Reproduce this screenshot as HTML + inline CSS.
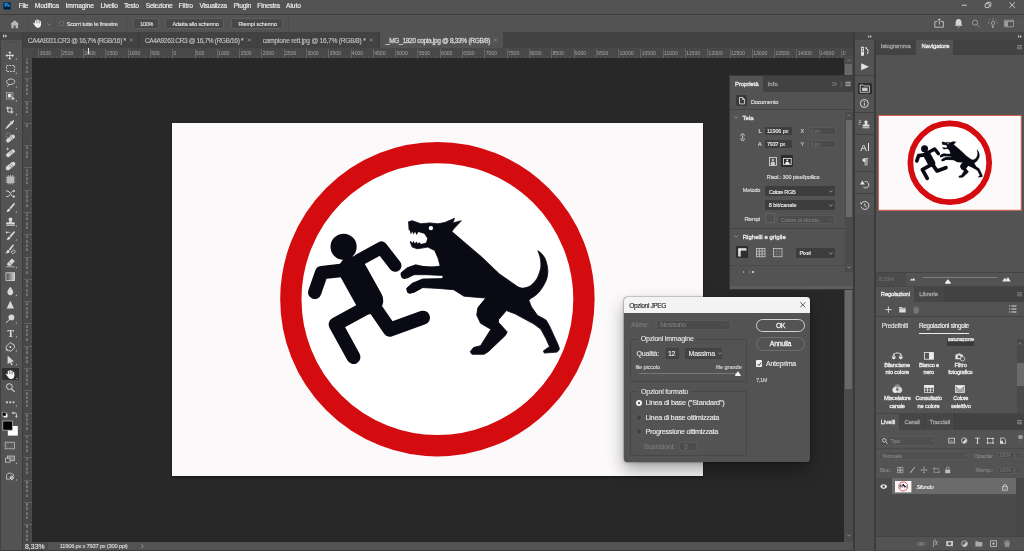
<!DOCTYPE html>
<html lang="it">
<head>
<meta charset="utf-8">
<title>Photoshop - Opzioni JPEG</title>
<style>
*{box-sizing:border-box;margin:0;padding:0}
html,body{width:1024px;height:551px;overflow:hidden;background:#282828}
body{position:relative;font-family:"Liberation Sans",sans-serif;color:#dcdcdc;font-size:6.6px;line-height:1}
.a{position:absolute}
.t{position:absolute;white-space:nowrap;line-height:1;-webkit-text-stroke-width:0.120px}
.b{font-weight:bold}
.t.sb{font-weight:normal;-webkit-text-stroke-width:0.260px}
svg{position:absolute;overflow:visible}
/* top */
#menubar{left:0;top:0;width:1024px;height:14px;background:#535353}
#menuline{left:0;top:14px;width:1024px;height:1px;background:#3e3e3e}
#optbar{left:0;top:15px;width:1024px;height:17px;background:#535353}
#tabbar{left:0;top:32px;width:853px;height:16px;background:#424242}
.menu{font-size:6.7px;color:#ececec;-webkit-text-stroke:0.18px #ececec}
.btn{height:10.5px;background:#484848;border:0.5px solid #5e5e5e;border-radius:1.5px}
.btn span{font-size:5.400px;color:#e6e6e6}
.tab{font-size:6.6px;color:#c4c4c4;-webkit-text-stroke:0.12px #c4c4c4}
.tabx{top:36.6px;font-size:7px;color:#a8a8a8}
/* rulers */
#hruler{left:23px;top:48px;width:830px;height:9.5px;background:#484848}
#vruler{left:23px;top:57.5px;width:9px;height:484.100px;background:#484848}
.rl{position:absolute;top:3.1px;font-size:5.1px;color:#a4a4a4;line-height:1;white-space:nowrap}
.rk{position:absolute;top:0.6px;width:0.7px;height:9px;background:#646464}
.rm{position:absolute;top:8px;width:0.5px;height:1.500px;background:#555}
.vk{position:absolute;left:0.6px;height:0.700px;width:8.4px;background:#606060}
.vm{position:absolute;left:7.500px;height:0.500px;width:1.500px;background:#555}
.vl{position:absolute;left:2.500px;font-size:4.400px;line-height:4.300px;color:#a9a9a9;text-align:center;width:3px}
/* toolbar */
#toolhead{left:0;top:32px;width:22.5px;height:8px;background:#454545}
#toolbar{left:0;top:40px;width:22.5px;height:511px;background:#535353}
#canvas{left:31.500px;top:57.5px;width:813px;height:484.100px;background:#282828}
#status{left:22.5px;top:541.6px;width:830.5px;height:9.4px;background:#535353}
/* panels */
.pan{background:#535353}
.lbl{font-size:5.700px;color:#f0f0f0}
.dk{background:#424242}
</style>
</head>
<body>
<div id="root" style="position:absolute;left:0;top:0;width:1024px;height:551px;will-change:transform">
<!-- ===== canvas area ===== -->
<div id="canvas" class="a"></div>
<div id="doc" class="a" style="left:172.2px;top:122.8px;width:530.9px;height:353.1px;background:#fbf9fa;box-shadow:0 0.5px 2px rgba(0,0,0,.55)"></div>
<svg id="art" style="left:0;top:0" width="1024" height="551" viewBox="0 0 1024 551">
<defs>
<g id="sign">
<circle cx="437.400" cy="299.200" r="136.500" fill="#ffffff"/>
<circle cx="437.400" cy="299.200" r="146.550" fill="none" stroke="#d40b0f" stroke-width="21.300"/>
<g id="figures" fill="#090a14" stroke="#090a14" stroke-linejoin="round" stroke-linecap="round">
<!-- man -->
<circle cx="343.600" cy="246.800" r="13.100" stroke="none"/>
<path d="M352.400 270L369.400 300.500" fill="none" stroke-width="27.600"/>
<path d="M345 270L321.600 272.600L314.700 292.400" fill="none" stroke-width="13.400"/>
<path d="M358.600 260.200L381.400 247.800L395.200 265.600" fill="none" stroke-width="12.500"/>
<path d="M365.400 308.100L335.600 324.400L353.500 357" fill="none" stroke-width="14"/>
<path d="M374.900 308.100L389.900 329.700L423 317.700" fill="none" stroke-width="14"/>
<!-- dog -->
<path stroke-width="0.800" d="M408.800 221.700L412.200 220.700L420.900 223.800L429.500 222.900L438.100 223.800L445 222.400L454.500 218.300L452.800 222.900L461.400 220.700L453.600 229L451.900 231.600L464 241.900L481.200 256.600L499.500 274L516.700 286
C519 287.600 521.500 288.300 523.600 288.100C527 287.600 530 286.500 532.200 284.300C535 281.500 537.300 278.800 538.300 275.700C539.800 272 540.900 268.500 540.900 265.300C541 262 540.500 258.500 539.500 255L537.800 250.800
C540 252 542 253.800 543.500 256C545 258 546 260.500 546.500 263C547.500 266 547.900 269 547.800 272.200C547.600 276 546.800 279.500 545.200 282.600C543.500 286 541.500 289.300 539.100 292.100C537 294.500 534.500 296.500 531.400 298.100L528.800 300.200
L531.400 306.700L537.400 315.300L546 320L549.500 325.900L558.100 344.800L559.500 349.100L557.200 352.100L544.300 353.100L543.400 350.900L549.500 346.600L546 338.800L540.900 329.300L534 324.100L515 313.800L506.400 310.600L498.600 319.700L498.600 322.400L507.200 331.900L505.500 335.300L488.300 351.700L484 354.300L471.900 354.300L470.200 351.700L473.600 347.400L480.500 345.700L490.900 329.300L480.500 323.300L476.700 315L477.900 307.800L485.700 298.100L475.300 297.200L464 296.200L453.600 289.700L438.100 288.400L422.600 287.600L414 292.400L407.900 292.800L406.700 288.400L412.200 283.300L422.600 279L442.400 278.600L443.300 275.500L426 274.700L414 274.700L407.100 278.100L401.900 277.200L401 272.900L407.100 267.800L415.700 264.800L429.500 267.800L440.200 266L438.100 258.300L434.700 250.500L427.800 247.100L417.400 248.800L412.200 247.100L410.200 241.900L409.100 229.800z"/>
<path d="M446 270.800L415 269.600L404.600 275" fill="none" stroke-width="7.600"/>
<path d="M455 284.400L422.600 283.300L410.600 289.600" fill="none" stroke-width="7.800"/>
<circle cx="488.600" cy="312" r="11.200" stroke="none"/>
<path fill="#ffffff" stroke="none" d="M407 230.300L409.700 230.300L410.900 234.500L412.200 231.600L413.600 234.500L415 231.700L416.700 235L418.300 232.100L424.300 233.800L427.400 238.400L426 242.800L420.900 244.100L419.100 241.900L417.800 243.800L416.400 241.400L415 243.600L413.600 241L412.200 243.100L410.900 240.700L409.700 241.900L407 241.900z"/>
<circle cx="430.900" cy="228.100" r="2.200" fill="#ffffff" stroke="none"/>
</g>
</g>
</defs>
<use href="#sign"/>
</svg>

<!-- ===== top bars ===== -->
<div id="menubar" class="a">
  <div class="a" style="left:3px;top:2px;width:8.2px;height:8px;border-radius:1.6px;background:#001e36;border:0.5px solid #0b3a5f"></div>
  <span class="t b" style="letter-spacing:-0.237px;left:4.4px;top:4.300px;font-size:4.8px;color:#31a8ff">Ps</span>
  <span class="t menu" style="letter-spacing:-0.345px;top:3.2px;left:18.8px">File</span>
  <span class="t menu" style="letter-spacing:-0.113px;top:3.2px;left:34.8px">Modifica</span>
  <span class="t menu" style="letter-spacing:-0.147px;top:3.2px;left:65.6px">Immagine</span>
  <span class="t menu" style="letter-spacing:-0.281px;top:3.2px;left:100.6px">Livello</span>
  <span class="t menu" style="letter-spacing:-0.277px;top:3.2px;left:124px">Testo</span>
  <span class="t menu" style="letter-spacing:-0.308px;top:3.2px;left:145.8px">Selezione</span>
  <span class="t menu" style="letter-spacing:-0.079px;top:3.2px;left:178.6px">Filtro</span>
  <span class="t menu" style="letter-spacing:-0.270px;top:3.2px;left:199.5px">Visualizza</span>
  <span class="t menu" style="letter-spacing:-0.199px;top:3.2px;left:233.6px">Plugin</span>
  <span class="t menu" style="letter-spacing:-0.209px;top:3.2px;left:257.3px">Finestra</span>
  <span class="t menu" style="letter-spacing:-0.050px;top:3.2px;left:286px">Aiuto</span>
  <svg style="left:958px;top:0" width="66" height="14" viewBox="958 0 66 14" fill="none" stroke="#e6e6e6" stroke-width="0.8">
    <path d="M961.7 5.2h5.2"/>
    <rect x="985.2" y="3.6" width="4" height="4" rx="0.8"/><path d="M986.6 3.4v-0.3a0.8 0.8 0 0 1 .8-.8h2.6a0.8 0.8 0 0 1 .8.8v2.6a0.8 0.8 0 0 1-.8.8h-.4"/>
    <path d="M1009.4 2.3l5.6 5.6M1015 2.3l-5.6 5.6"/>
  </svg>
</div>
<div id="menuline" class="a"></div>
<div id="optbar" class="a">
  <!-- home -->
  <svg style="left:10.4px;top:4.6px" width="9.4" height="8.4" viewBox="0 0 9.4 8.4"><path d="M4.7 0.2L0.2 4.2h1.2v4h2.3V5.6h2v2.6h2.3v-4h1.2z" fill="#b9b9b9"/></svg>
  <div class="a" style="left:27.6px;top:2px;width:0.6px;height:13.5px;background:#4a4a4a"></div>
  <!-- hand -->
  <svg style="left:32.600px;top:4.200px" width="10" height="10" viewBox="0 0 10 10"><g transform="translate(0 0) scale(0.900)" fill="#f1f1f1"><rect x="2.100" y="1.300" width="1.350" height="5" rx="0.650"/><rect x="3.900" y="0.300" width="1.400" height="6" rx="0.700"/><rect x="5.750" y="0.900" width="1.350" height="5.400" rx="0.650"/><rect x="7.550" y="2.300" width="1.250" height="4.400" rx="0.600"/><path d="M2.100 4.700h6.700v1.900c0 1.900-1.400 3.100-3.300 3.100-1.600 0-2.400-.800-3.200-2L.3 5.100c-.4-.7.500-1.300 1-.7l.8.900z"/></g></svg>
  <svg style="left:46.6px;top:8.2px" width="4" height="3" viewBox="0 0 4 3"><path d="M0.4 0.5L2 2.2 3.6 0.5" fill="none" stroke="#9a9a9a" stroke-width="0.6"/></svg>
  <div class="a" style="left:54px;top:2px;width:0.6px;height:13.5px;background:#4a4a4a"></div>
  <div class="a" style="left:58.8px;top:6.4px;width:5px;height:5px;border-radius:1px;border:0.6px solid #6a6a6a;background:#4b4b4b"></div>
  <span class="t" style="letter-spacing:-0.238px;left:66.5px;top:6.4px;font-size:6px;color:#e4e4e4">Scorri tutte le finestre</span>
  <div class="a" style="left:126.2px;top:2px;width:0.6px;height:13.5px;background:#4a4a4a"></div>
  <div class="a btn" style="left:133px;top:3px;width:25.6px"><span class="t" style="letter-spacing:-0.299px;top:3.3px;left:6.3px;right:auto;text-align:left">100%</span></div>
  <div class="a btn" style="left:165px;top:3px;width:58.7px"><span class="t" style="letter-spacing:-0.066px;top:3.3px;left:6.4px;right:auto;text-align:left">Adatta allo schermo</span></div>
  <div class="a btn" style="left:231px;top:3px;width:51.6px"><span class="t" style="letter-spacing:-0.025px;top:3.3px;left:6.4px;right:auto;text-align:left">Riempi schermo</span></div>
  <div class="a" style="left:287.6px;top:2px;width:0.6px;height:13.5px;background:#4a4a4a"></div>
  <!-- right icons -->
  <svg style="left:930px;top:0" width="94" height="17" viewBox="930 15 94 17" fill="none" stroke="#d4d4d4" stroke-width="0.8">
    <path d="M937.2 21.6h-2.4v5.6h8.600v-5.600h-2.400M939.3 24.600v-5.600M937.600 20.400l1.700-1.700 1.700 1.700"/>
    <path d="M958.6 19c-1.900 0-2.900 1.400-2.900 3.200v2.200l-1.100 1.400h8l-1.100-1.400v-2.200c0-1.800-1-3.200-2.900-3.200zM957.600 26.600a1 1 0 0 0 2 0z" fill="#d4d4d4" stroke="none"/>
    <circle cx="975" cy="22.600" r="2.600" stroke="#a9a9a9"/><path d="M977 24.600l2.600 2.600" stroke="#a9a9a9"/>
    <path d="M992.800 25.400c-1.600-1-1.700-3.800.0-4.400 1.700-.6 2.700 2.800 0 4.400zM991.900 26.400h1.800M992 27.400h1.600M992.800 19.300v-.9M989.800 20.300l-.7-.6M995.800 20.300l.7-.6M989 22.900h-.9M996.600 22.900h.9" stroke="#e0e0e0" stroke-width="0.6"/>
    <rect x="1004.400" y="20.200" width="9.200" height="6.600" rx="0.600" stroke="#a9a9a9"/><rect x="1005.200" y="21.800" width="2.600" height="4.400" fill="#a9a9a9" stroke="none"/><path d="M1004.400 21.600h9.200" stroke="#a9a9a9"/>
    <path d="M1017 23l1.200 1.200 1.200-1.200" stroke="#6e6e6e" stroke-width="0.6"/>
  </svg>
</div>
<div id="tabbar" class="a">
  <svg style="left:2.6px;top:3.2px" width="5" height="3.6" viewBox="0 0 5 3.6"><path d="M0.3 0.3L2 1.8 0.3 3.300zM2.600 0.300L4.300 1.800 2.600 3.300z" fill="#c8c8c8"/></svg>
  <div class="a" style="left:380px;top:0;width:123.400px;height:16px;background:#535353"></div>
  <div class="a" style="left:138.4px;top:0;width:0.6px;height:16px;background:#3a3a3a"></div>
  <div class="a" style="left:257.4px;top:0;width:0.6px;height:16px;background:#3a3a3a"></div>
  <div class="a" style="left:379.4px;top:0;width:0.6px;height:16px;background:#3a3a3a"></div>
  <span class="t tab" style="letter-spacing:-0.379px;left:27.8px;top:6.2px">CA4A9311.CR3 @ 16,7% (RGB/16) *</span>
  <span class="t tab" style="letter-spacing:-0.382px;left:144.900px;top:6.2px">CA4A9263.CR3 @ 16,7% (RGB/16) *</span>
  <span class="t tab" style="letter-spacing:-0.210px;left:262.800px;top:6.2px">campione rett.jpg @ 16,7% (RGB/8) *</span>
  <span class="t tab sb" style="letter-spacing:-0.339px;left:385.800px;top:6.2px;color:#f2f2f2">_MG_1820 copia.jpg @ 8,33% (RGB/8)</span>
  <svg style="left:0;top:0" width="510" height="16" viewBox="0 0 510 16" stroke="#b0b0b0" stroke-width="0.600" fill="none">
    <path d="M130 6.6l2.800 2.800M132.800 6.600l-2.800 2.800"/>
    <path d="M247.800 6.600l2.800 2.800M250.600 6.600l-2.800 2.800"/>
    <path d="M369.800 6.600l2.800 2.800M372.600 6.600l-2.800 2.800"/>
    <path d="M494 6.600l2.800 2.800M496.800 6.600l-2.800 2.800" stroke="#9d9d9d"/>
  </svg>
</div>
<div id="hruler" class="a" style="overflow:hidden"><i class="rk" style="left:15.43px"></i><span class="rl" style="left:16.73px">3000</span><i class="rm" style="left:19.89px"></i><i class="rm" style="left:24.35px"></i><i class="rm" style="left:28.80px"></i><i class="rm" style="left:33.26px"></i><i class="rk" style="left:37.72px"></i><span class="rl" style="left:39.02px">2500</span><i class="rm" style="left:42.18px"></i><i class="rm" style="left:46.64px"></i><i class="rm" style="left:51.10px"></i><i class="rm" style="left:55.56px"></i><i class="rk" style="left:60.02px"></i><span class="rl" style="left:61.32px">2000</span><i class="rm" style="left:64.48px"></i><i class="rm" style="left:68.94px"></i><i class="rm" style="left:73.40px"></i><i class="rm" style="left:77.85px"></i><i class="rk" style="left:82.31px"></i><span class="rl" style="left:83.61px">1500</span><i class="rm" style="left:86.77px"></i><i class="rm" style="left:91.23px"></i><i class="rm" style="left:95.69px"></i><i class="rm" style="left:100.15px"></i><i class="rk" style="left:104.61px"></i><span class="rl" style="left:105.91px">1000</span><i class="rm" style="left:109.07px"></i><i class="rm" style="left:113.53px"></i><i class="rm" style="left:117.99px"></i><i class="rm" style="left:122.45px"></i><i class="rk" style="left:126.90px"></i><span class="rl" style="left:128.20px">500</span><i class="rm" style="left:131.36px"></i><i class="rm" style="left:135.82px"></i><i class="rm" style="left:140.28px"></i><i class="rm" style="left:144.74px"></i><i class="rk" style="left:149.20px"></i><span class="rl" style="left:150.50px">0</span><i class="rm" style="left:153.66px"></i><i class="rm" style="left:158.12px"></i><i class="rm" style="left:162.58px"></i><i class="rm" style="left:167.04px"></i><i class="rk" style="left:171.50px"></i><span class="rl" style="left:172.80px">500</span><i class="rm" style="left:175.95px"></i><i class="rm" style="left:180.41px"></i><i class="rm" style="left:184.87px"></i><i class="rm" style="left:189.33px"></i><i class="rk" style="left:193.79px"></i><span class="rl" style="left:195.09px">1000</span><i class="rm" style="left:198.25px"></i><i class="rm" style="left:202.71px"></i><i class="rm" style="left:207.17px"></i><i class="rm" style="left:211.63px"></i><i class="rk" style="left:216.09px"></i><span class="rl" style="left:217.39px">1500</span><i class="rm" style="left:220.55px"></i><i class="rm" style="left:225.00px"></i><i class="rm" style="left:229.46px"></i><i class="rm" style="left:233.92px"></i><i class="rk" style="left:238.38px"></i><span class="rl" style="left:239.68px">2000</span><i class="rm" style="left:242.84px"></i><i class="rm" style="left:247.30px"></i><i class="rm" style="left:251.76px"></i><i class="rm" style="left:256.22px"></i><i class="rk" style="left:260.68px"></i><span class="rl" style="left:261.98px">2500</span><i class="rm" style="left:265.14px"></i><i class="rm" style="left:269.60px"></i><i class="rm" style="left:274.05px"></i><i class="rm" style="left:278.51px"></i><i class="rk" style="left:282.97px"></i><span class="rl" style="left:284.27px">3000</span><i class="rm" style="left:287.43px"></i><i class="rm" style="left:291.89px"></i><i class="rm" style="left:296.35px"></i><i class="rm" style="left:300.81px"></i><i class="rk" style="left:305.27px"></i><span class="rl" style="left:306.57px">3500</span><i class="rm" style="left:309.73px"></i><i class="rm" style="left:314.19px"></i><i class="rm" style="left:318.65px"></i><i class="rm" style="left:323.10px"></i><i class="rk" style="left:327.56px"></i><span class="rl" style="left:328.86px">4000</span><i class="rm" style="left:332.02px"></i><i class="rm" style="left:336.48px"></i><i class="rm" style="left:340.94px"></i><i class="rm" style="left:345.40px"></i><i class="rk" style="left:349.86px"></i><span class="rl" style="left:351.16px">4500</span><i class="rm" style="left:354.32px"></i><i class="rm" style="left:358.78px"></i><i class="rm" style="left:363.24px"></i><i class="rm" style="left:367.70px"></i><i class="rk" style="left:372.15px"></i><span class="rl" style="left:373.45px">5000</span><i class="rm" style="left:376.61px"></i><i class="rm" style="left:381.07px"></i><i class="rm" style="left:385.53px"></i><i class="rm" style="left:389.99px"></i><i class="rk" style="left:394.45px"></i><span class="rl" style="left:395.75px">5500</span><i class="rm" style="left:398.91px"></i><i class="rm" style="left:403.37px"></i><i class="rm" style="left:407.83px"></i><i class="rm" style="left:412.29px"></i><i class="rk" style="left:416.75px"></i><span class="rl" style="left:418.05px">6000</span><i class="rm" style="left:421.20px"></i><i class="rm" style="left:425.66px"></i><i class="rm" style="left:430.12px"></i><i class="rm" style="left:434.58px"></i><i class="rk" style="left:439.04px"></i><span class="rl" style="left:440.34px">6500</span><i class="rm" style="left:443.50px"></i><i class="rm" style="left:447.96px"></i><i class="rm" style="left:452.42px"></i><i class="rm" style="left:456.88px"></i><i class="rk" style="left:461.34px"></i><span class="rl" style="left:462.64px">7000</span><i class="rm" style="left:465.80px"></i><i class="rm" style="left:470.25px"></i><i class="rm" style="left:474.71px"></i><i class="rm" style="left:479.17px"></i><i class="rk" style="left:483.63px"></i><span class="rl" style="left:484.93px">7500</span><i class="rm" style="left:488.09px"></i><i class="rm" style="left:492.55px"></i><i class="rm" style="left:497.01px"></i><i class="rm" style="left:501.47px"></i><i class="rk" style="left:505.93px"></i><span class="rl" style="left:507.23px">8000</span><i class="rm" style="left:510.39px"></i><i class="rm" style="left:514.85px"></i><i class="rm" style="left:519.30px"></i><i class="rm" style="left:523.76px"></i><i class="rk" style="left:528.22px"></i><span class="rl" style="left:529.52px">8500</span><i class="rm" style="left:532.68px"></i><i class="rm" style="left:537.14px"></i><i class="rm" style="left:541.60px"></i><i class="rm" style="left:546.06px"></i><i class="rk" style="left:550.52px"></i><span class="rl" style="left:551.82px">9000</span><i class="rm" style="left:554.98px"></i><i class="rm" style="left:559.44px"></i><i class="rm" style="left:563.90px"></i><i class="rm" style="left:568.36px"></i><i class="rk" style="left:572.81px"></i><span class="rl" style="left:574.11px">9500</span><i class="rm" style="left:577.27px"></i><i class="rm" style="left:581.73px"></i><i class="rm" style="left:586.19px"></i><i class="rm" style="left:590.65px"></i><i class="rk" style="left:595.11px"></i><span class="rl" style="left:596.41px">10000</span><i class="rm" style="left:599.57px"></i><i class="rm" style="left:604.03px"></i><i class="rm" style="left:608.49px"></i><i class="rm" style="left:612.95px"></i><i class="rk" style="left:617.41px"></i><span class="rl" style="left:618.71px">10500</span><i class="rm" style="left:621.86px"></i><i class="rm" style="left:626.32px"></i><i class="rm" style="left:630.78px"></i><i class="rm" style="left:635.24px"></i><i class="rk" style="left:639.70px"></i><span class="rl" style="left:641.00px">11000</span><i class="rm" style="left:644.16px"></i><i class="rm" style="left:648.62px"></i><i class="rm" style="left:653.08px"></i><i class="rm" style="left:657.54px"></i><i class="rk" style="left:662.00px"></i><span class="rl" style="left:663.30px">11500</span><i class="rm" style="left:666.46px"></i><i class="rm" style="left:670.91px"></i><i class="rm" style="left:675.37px"></i><i class="rm" style="left:679.83px"></i><i class="rk" style="left:684.29px"></i><span class="rl" style="left:685.59px">12000</span><i class="rm" style="left:688.75px"></i><i class="rm" style="left:693.21px"></i><i class="rm" style="left:697.67px"></i><i class="rm" style="left:702.13px"></i><i class="rk" style="left:706.59px"></i><span class="rl" style="left:707.89px">12500</span><i class="rm" style="left:711.05px"></i><i class="rm" style="left:715.51px"></i><i class="rm" style="left:719.96px"></i><i class="rm" style="left:724.42px"></i><i class="rk" style="left:728.88px"></i><span class="rl" style="left:730.18px">13000</span><i class="rm" style="left:733.34px"></i><i class="rm" style="left:737.80px"></i><i class="rm" style="left:742.26px"></i><i class="rm" style="left:746.72px"></i><i class="rk" style="left:751.18px"></i><span class="rl" style="left:752.48px">13500</span><i class="rm" style="left:755.64px"></i><i class="rm" style="left:760.10px"></i><i class="rm" style="left:764.56px"></i><i class="rm" style="left:769.01px"></i><i class="rk" style="left:773.47px"></i><span class="rl" style="left:774.77px">14000</span><i class="rm" style="left:777.93px"></i><i class="rm" style="left:782.39px"></i><i class="rm" style="left:786.85px"></i><i class="rm" style="left:791.31px"></i><i class="rk" style="left:795.77px"></i><span class="rl" style="left:797.07px">14500</span><i class="rm" style="left:800.23px"></i><i class="rm" style="left:804.69px"></i><i class="rm" style="left:809.15px"></i><i class="rm" style="left:813.61px"></i><i class="rk" style="left:818.06px"></i><span class="rl" style="left:819.36px;width:4px;overflow:hidden">15000</span><i class="rm" style="left:822.52px"></i><i class="rm" style="left:826.98px"></i>
  <div class="a" style="left:65px;top:0;width:0.7px;height:6px;background:#e8e8e8"></div>
</div>
<div id="vruler" class="a" style="overflow:hidden"><span class="vl" style="top:-0.39px">1<br>5<br>0<br>0</span><i class="vm" style="top:2.87px"></i><i class="vm" style="top:7.33px"></i><i class="vm" style="top:11.79px"></i><i class="vm" style="top:16.25px"></i><i class="vk" style="top:20.71px"></i><span class="vl" style="top:21.91px">1<br>0<br>0<br>0</span><i class="vm" style="top:25.17px"></i><i class="vm" style="top:29.63px"></i><i class="vm" style="top:34.09px"></i><i class="vm" style="top:38.55px"></i><i class="vk" style="top:43.00px"></i><span class="vl" style="top:44.20px">5<br>0<br>0</span><i class="vm" style="top:47.46px"></i><i class="vm" style="top:51.92px"></i><i class="vm" style="top:56.38px"></i><i class="vm" style="top:60.84px"></i><i class="vk" style="top:65.30px"></i><span class="vl" style="top:66.50px">0</span><i class="vm" style="top:69.76px"></i><i class="vm" style="top:74.22px"></i><i class="vm" style="top:78.68px"></i><i class="vm" style="top:83.14px"></i><i class="vk" style="top:87.60px"></i><span class="vl" style="top:88.80px">5<br>0<br>0</span><i class="vm" style="top:92.05px"></i><i class="vm" style="top:96.51px"></i><i class="vm" style="top:100.97px"></i><i class="vm" style="top:105.43px"></i><i class="vk" style="top:109.89px"></i><span class="vl" style="top:111.09px">1<br>0<br>0<br>0</span><i class="vm" style="top:114.35px"></i><i class="vm" style="top:118.81px"></i><i class="vm" style="top:123.27px"></i><i class="vm" style="top:127.73px"></i><i class="vk" style="top:132.19px"></i><span class="vl" style="top:133.39px">1<br>5<br>0<br>0</span><i class="vm" style="top:136.65px"></i><i class="vm" style="top:141.10px"></i><i class="vm" style="top:145.56px"></i><i class="vm" style="top:150.02px"></i><i class="vk" style="top:154.48px"></i><span class="vl" style="top:155.68px">2<br>0<br>0<br>0</span><i class="vm" style="top:158.94px"></i><i class="vm" style="top:163.40px"></i><i class="vm" style="top:167.86px"></i><i class="vm" style="top:172.32px"></i><i class="vk" style="top:176.78px"></i><span class="vl" style="top:177.98px">2<br>5<br>0<br>0</span><i class="vm" style="top:181.24px"></i><i class="vm" style="top:185.70px"></i><i class="vm" style="top:190.15px"></i><i class="vm" style="top:194.61px"></i><i class="vk" style="top:199.07px"></i><span class="vl" style="top:200.27px">3<br>0<br>0<br>0</span><i class="vm" style="top:203.53px"></i><i class="vm" style="top:207.99px"></i><i class="vm" style="top:212.45px"></i><i class="vm" style="top:216.91px"></i><i class="vk" style="top:221.37px"></i><span class="vl" style="top:222.57px">3<br>5<br>0<br>0</span><i class="vm" style="top:225.83px"></i><i class="vm" style="top:230.29px"></i><i class="vm" style="top:234.75px"></i><i class="vm" style="top:239.20px"></i><i class="vk" style="top:243.66px"></i><span class="vl" style="top:244.86px">4<br>0<br>0<br>0</span><i class="vm" style="top:248.12px"></i><i class="vm" style="top:252.58px"></i><i class="vm" style="top:257.04px"></i><i class="vm" style="top:261.50px"></i><i class="vk" style="top:265.96px"></i><span class="vl" style="top:267.16px">4<br>5<br>0<br>0</span><i class="vm" style="top:270.42px"></i><i class="vm" style="top:274.88px"></i><i class="vm" style="top:279.34px"></i><i class="vm" style="top:283.80px"></i><i class="vk" style="top:288.25px"></i><span class="vl" style="top:289.45px">5<br>0<br>0<br>0</span><i class="vm" style="top:292.71px"></i><i class="vm" style="top:297.17px"></i><i class="vm" style="top:301.63px"></i><i class="vm" style="top:306.09px"></i><i class="vk" style="top:310.55px"></i><span class="vl" style="top:311.75px">5<br>5<br>0<br>0</span><i class="vm" style="top:315.01px"></i><i class="vm" style="top:319.47px"></i><i class="vm" style="top:323.93px"></i><i class="vm" style="top:328.39px"></i><i class="vk" style="top:332.85px"></i><span class="vl" style="top:334.05px">6<br>0<br>0<br>0</span><i class="vm" style="top:337.30px"></i><i class="vm" style="top:341.76px"></i><i class="vm" style="top:346.22px"></i><i class="vm" style="top:350.68px"></i><i class="vk" style="top:355.14px"></i><span class="vl" style="top:356.34px">6<br>5<br>0<br>0</span><i class="vm" style="top:359.60px"></i><i class="vm" style="top:364.06px"></i><i class="vm" style="top:368.52px"></i><i class="vm" style="top:372.98px"></i><i class="vk" style="top:377.44px"></i><span class="vl" style="top:378.64px">7<br>0<br>0<br>0</span><i class="vm" style="top:381.90px"></i><i class="vm" style="top:386.35px"></i><i class="vm" style="top:390.81px"></i><i class="vm" style="top:395.27px"></i><i class="vk" style="top:399.73px"></i><span class="vl" style="top:400.93px">7<br>5<br>0<br>0</span><i class="vm" style="top:404.19px"></i><i class="vm" style="top:408.65px"></i><i class="vm" style="top:413.11px"></i><i class="vm" style="top:417.57px"></i><i class="vk" style="top:422.03px"></i><span class="vl" style="top:423.23px">8<br>0<br>0<br>0</span><i class="vm" style="top:426.49px"></i><i class="vm" style="top:430.95px"></i><i class="vm" style="top:435.40px"></i><i class="vm" style="top:439.86px"></i><i class="vk" style="top:444.32px"></i><span class="vl" style="top:445.52px">8<br>5<br>0<br>0</span><i class="vm" style="top:448.78px"></i><i class="vm" style="top:453.24px"></i><i class="vm" style="top:457.70px"></i><i class="vm" style="top:462.16px"></i><i class="vk" style="top:466.62px"></i><span class="vl" style="top:467.82px">9<br>0<br>0<br>0</span><i class="vm" style="top:471.08px"></i><i class="vm" style="top:475.54px"></i><i class="vm" style="top:480.00px"></i></div>
<div class="a" style="left:23px;top:48px;width:9px;height:9.500px;background:#4a4a4a"></div>
<div id="toolhead" class="a"></div>
<div id="toolbar" class="a"></div>
<div class="a" style="left:21.6px;top:32px;width:1.4px;height:519px;background:#3c3c3c"></div>
<div class="a" style="left:0;top:32px;width:0.8px;height:519px;background:#404040"></div>
<div class="a" style="left:5px;top:42.400px;width:12px;height:0.800px;background:#494949"></div>
<div class="a" style="left:2px;top:368px;width:16.800px;height:12.200px;background:#2e2e2e;border-radius:1px"></div>
<svg id="tools" style="left:0;top:0" width="23" height="551" viewBox="0 0 23 551" fill="#d8d8d8" stroke="none">
  <!-- collapse chevrons -->
  <path d="M3 34.300l1.900 1.700L3 37.700zM5.300 34.300l1.900 1.700-1.900 1.700z" fill="#cfcfcf"/>
  <!-- corner flyout triangles -->
  <g fill="#bdbdbd">
    <path d="M17 58.200v1.600h-1.600z"/><path d="M17 72.200v1.600h-1.600z"/><path d="M17 86v1.600h-1.600z"/><path d="M17 99.800v1.600h-1.600z"/>
    <path d="M17 113.600v1.600h-1.600z"/><path d="M17 127.600v1.600h-1.600z"/><path d="M17 211v1.600h-1.600z"/><path d="M17 225v1.600h-1.600z"/>
    <path d="M17 239v1.600h-1.600z"/><path d="M17 266.600v1.600h-1.600z"/><path d="M17 294.400v1.600h-1.600z"/><path d="M17 322v1.600h-1.600z"/>
    <path d="M17 335.800v1.600h-1.600z"/><path d="M17 349.800v1.600h-1.600z"/><path d="M17 363.600v1.600h-1.600z"/><path d="M17.400 377.400v1.600h-1.600z"/>
    <path d="M17 405v1.600h-1.600z"/><path d="M17 462.400v1.600h-1.600z"/><path d="M17 479v1.600h-1.600z"/>
  </g>
  <!-- move -->
  <path d="M9.800 51.200l1.700 1.900h-1.200v1.900h1.900v-1.200l1.900 1.700-1.900 1.700v-1.200h-1.900v1.900h1.200l-1.700 1.900-1.700-1.900h1.200v-1.900H7.400v1.200l-1.900-1.700 1.900-1.700v1.200h1.900v-1.900H8.100z"/>
  <!-- marquee -->
  <rect x="6.600" y="65.500" width="8" height="6" fill="none" stroke="#d8d8d8" stroke-width="0.900" stroke-dasharray="1.800 1"/>
  <!-- lasso -->
  <path d="M10.800 79c2.300 0 3.900 1.100 3.900 2.600s-1.900 2.900-4.300 2.900c-.6 0-1.100-.1-1.600-.2M8.600 84.200c-1.200-.5-2-1.400-2-2.400 0-1.500 1.800-2.800 4.200-2.800M8.400 84.300c.3.800-.2 1.700-1.300 2.200" fill="none" stroke="#d8d8d8" stroke-width="0.900"/>
  <!-- object select -->
  <rect x="6.600" y="92.600" width="6.400" height="6.400" fill="none" stroke="#b5b5b5" stroke-width="0.700"/>
  <rect x="7.800" y="93.800" width="3.600" height="3.600" fill="#e8e8e8"/>
  <path d="M10.600 95.600l4.800 3.300-2 .3-.3 2z" fill="#f2f2f2" stroke="#535353" stroke-width="0.400"/>
  <!-- crop -->
  <path d="M7.800 106.400v5.600h5.600M6.200 108h5.600v5.600" fill="none" stroke="#dcdcdc" stroke-width="1"/>
  <!-- eyedropper -->
  <path d="M14 119.200c.8.800.6 1.700 0 2.300l-1 1 .5.500-.8.800-.5-.5-3.800 3.800c-.5.500-1.100.3-1.400.7l-.6.700-.7-.7.700-.6c.4-.3.200-.9.700-1.400l3.800-3.800-.5-.5.800-.8.500.5 1-1c.6-.6 1.500-.8 2.300 0z" transform="translate(-0.400 0.600)"/>
  <!-- healing brush (bandage + dotted circle) -->
  <circle cx="8.200" cy="135.400" r="2.400" fill="none" stroke="#bdbdbd" stroke-width="0.700" stroke-dasharray="1 0.800"/>
  <rect x="5.400" y="136.600" width="10.200" height="4" rx="2" transform="rotate(-38 10.500 138.600)"/>
  <path d="M9.300 137.200l2.600 3.200M10.800 136l2.600 3.200" stroke="#535353" stroke-width="0.500" fill="none"/>
  <!-- spot healing -->
  <rect x="5.400" y="151.200" width="10.200" height="4" rx="2" transform="rotate(-38 10.500 153.200)"/>
  <path d="M9.300 151.800l2.600 3.200M10.800 150.600l2.600 3.200" stroke="#535353" stroke-width="0.500" fill="none"/>
  <path d="M7.600 147.600v2.800M6.200 149h2.800" stroke="#d8d8d8" stroke-width="0.700" fill="none"/>
  <!-- bandage -->
  <rect x="5" y="163.800" width="11" height="4.400" rx="2.200" transform="rotate(-38 10.500 166)"/>
  <path d="M9.200 164.600l2.700 3.400M10.800 163.400l2.700 3.400" stroke="#535353" stroke-width="0.500" fill="none"/>
  <!-- patch chip -->
  <rect x="7" y="176.200" width="7" height="7" rx="0.800" fill="#b9b9b9"/>
  <path d="M8.200 175v1.200M10.500 175v1.200M12.800 175v1.200M8.200 183.200v1.200M10.500 183.200v1.200M12.800 183.200v1.200M5.800 177.400h1.200M5.800 179.700h1.200M5.800 182h1.200M14 177.400h1.200M14 179.700h1.200M14 182h1.200" stroke="#c8c8c8" stroke-width="0.800" fill="none"/>
  <!-- content-aware move (shuffle) -->
  <path d="M6.200 191h1.600c1.900 0 3.500 5.600 5.400 5.600h1.400M6.200 196.600h1.600c.8 0 1.400-.9 2-1.900M11.200 192.800c.6-1 1.200-1.800 2-1.800h1.400" fill="none" stroke="#dcdcdc" stroke-width="1"/>
  <path d="M13.400 189.400l1.900 1.600-1.900 1.600zM13.400 195l1.900 1.600-1.900 1.600z"/>
  <!-- brush -->
  <path d="M14.600 203.200c.5.400.3 1-.1 1.500l-3.700 4.500-1.400-1.200 3.900-4.400c.4-.5.900-.8 1.300-.4zM9 208.400l1.400 1.200c-.2 1.200-1 2-2.200 2.200-.8.200-1.500 0-2-.2.800-.4.900-1 1.100-1.700.3-.9.900-1.400 1.700-1.500z"/>
  <!-- stamp -->
  <path d="M10.500 217.600c1.100 0 1.900.8 1.900 1.800 0 .8-.6 1.300-.8 2-.1.500.1.900.6.900h1.600c.7 0 1 .4 1 1v1.200H6.200v-1.200c0-.6.300-1 1-1h1.600c.5 0 .7-.4.600-.9-.2-.7-.8-1.200-.8-2 0-1 .8-1.800 1.900-1.800zM6.200 225.200h8.600v.9H6.200z"/>
  <!-- history brush -->
  <path d="M14.600 231.400c.5.400.3 1-.1 1.500l-3.500 4.300-1.400-1.200 3.700-4.200c.4-.5.900-.8 1.300-.4zM9.200 236.400l1.400 1.200c-.2 1.200-1 2-2.200 2.200-.8.200-1.500 0-2-.2.800-.4.900-1 1.100-1.700.3-.9.900-1.400 1.700-1.500z"/>
  <path d="M6 233.200c1.400-1.200 3.200-1.200 4.400-.4" fill="none" stroke="#d8d8d8" stroke-width="0.800"/><path d="M5.600 231.600l2.200.2-1.400 1.900z"/>
  <!-- art history brush -->
  <path d="M13.600 244.600c.5.400.3 1-.1 1.500l-3.300 4.300-1.400-1.200 3.500-4.200c.4-.5.900-.8 1.300-.4zM8.400 249.800l1.400 1.200c-.2 1.200-1 2-2.200 2.200-.8.200-1.500 0-2-.2.800-.4.900-1 1.100-1.700.3-.9.900-1.400 1.700-1.500z"/>
  <path d="M12.800 249.600c1.400 0 2.300.9 2.300 2s-.9 1.900-2 1.900-1.800-.7-1.800-1.500.5-1.200 1.100-1.200.9.400.9.800" fill="none" stroke="#d8d8d8" stroke-width="0.800"/>
  <!-- eraser -->
  <path d="M11.800 258.600l3 2.400-4 4.800H8.400l-1.800-1.500z"/><path d="M8.900 262l3 2.500" stroke="#535353" stroke-width="0.500"/><path d="M6 266.800h8.800" stroke="#d8d8d8" stroke-width="0.700"/>
  <!-- gradient -->
  <defs><linearGradient id="gr" x1="0" x2="1" y1="0" y2="0"><stop offset="0" stop-color="#4a4a4a"/><stop offset="1" stop-color="#d0d0d0"/></linearGradient></defs>
  <rect x="6" y="272.800" width="8.600" height="7.600" fill="url(#gr)" stroke="#d8d8d8" stroke-width="0.800"/>
  <!-- blur drop -->
  <path d="M10.300 286.800c1.200 1.800 2.900 3.600 2.900 5.500 0 1.700-1.300 2.900-2.900 2.900s-2.900-1.200-2.900-2.900c0-1.900 1.700-3.700 2.900-5.500z"/>
  <!-- sharpen triangle -->
  <path d="M10.300 300.800l3.700 7.800H6.600z"/>
  <!-- dodge -->
  <circle cx="11.400" cy="317.400" r="2.900"/><path d="M9.400 319.600l-3.400 3.200" stroke="#d8d8d8" stroke-width="1" fill="none"/>
  <!-- T placeholder handled as text below -->
  <!-- pen -->
  <path d="M10.200 342.600l3.800 2.200.6 2.800-3.600 3.600-4.400-1.200-.6-3.400z" fill="none" stroke="#d8d8d8" stroke-width="0.900"/><circle cx="10.300" cy="346.900" r="1"/><path d="M5.800 350.800l2-1.600" stroke="#d8d8d8" stroke-width="0.800"/>
  <!-- path selection arrow -->
  <path d="M7.600 355.600l6.400 6-2.800.2 1.500 3-1.200.6-1.500-3.100-2.400 1.900z"/>
  <!-- hand (active) -->
  <g transform="translate(5.700 369.600) scale(0.970)" fill="#f6f6f6"><rect x="2.100" y="1.300" width="1.350" height="5" rx="0.650"/><rect x="3.900" y="0.300" width="1.400" height="6" rx="0.700"/><rect x="5.750" y="0.900" width="1.350" height="5.400" rx="0.650"/><rect x="7.550" y="2.300" width="1.250" height="4.400" rx="0.600"/><path d="M2.100 4.700h6.700v1.900c0 1.900-1.400 3.100-3.300 3.100-1.600 0-2.400-.800-3.200-2L.3 5.100c-.4-.7.500-1.300 1-.7l.8.900z"/></g>
  <!-- zoom -->
  <circle cx="9.400" cy="386.600" r="2.900" fill="none" stroke="#d8d8d8" stroke-width="1"/><path d="M11.600 388.800l3 3" stroke="#d8d8d8" stroke-width="1.200" fill="none"/>
  <!-- dots -->
  <rect x="6" y="401.400" width="1.800" height="1.800"/><rect x="9.300" y="401.400" width="1.800" height="1.800"/><rect x="12.600" y="401.400" width="1.800" height="1.800"/>
  <!-- default colors -->
  <rect x="3.600" y="413.600" width="3.800" height="3.800" fill="#fff"/><rect x="2.200" y="412.200" width="3.800" height="3.800" fill="#000" stroke="#cfcfcf" stroke-width="0.500"/>
  <!-- swap -->
  <path d="M13 413h2.200c.8 0 1.200.4 1.200 1.200v2.200" fill="none" stroke="#dcdcdc" stroke-width="0.900"/><path d="M13.400 411.600v2.800l-1.800-1.400zM15 416.200h2.800l-1.400 1.800z"/>
  <!-- fg/bg -->
  <rect x="7.800" y="426" width="10" height="9.600" fill="#ffffff"/>
  <rect x="2.800" y="421" width="9.600" height="9.200" fill="#000" stroke="#b4b4b4" stroke-width="0.800"/>
  <!-- quick mask -->
  <rect x="5.200" y="442.200" width="9.400" height="6.600" fill="none" stroke="#bdbdbd" stroke-width="0.800"/><rect x="7" y="443.800" width="5.800" height="3.400" fill="none" stroke="#8e8e8e" stroke-width="0.600" stroke-dasharray="0.800 0.600"/>
  <!-- screen mode -->
  <rect x="7.600" y="456" width="6.800" height="4.800" fill="#7a7a7a" stroke="#d0d0d0" stroke-width="0.700"/><rect x="5.400" y="458.200" width="4.600" height="4" fill="#535353" stroke="#d0d0d0" stroke-width="0.700"/>
  <!-- frame/gear -->
  <path d="M6.600 474.600l1.400-1.400h3.400l1 1h1v2M6.600 474.600v4.600h3" fill="none" stroke="#cfcfcf" stroke-width="0.800"/><circle cx="11.800" cy="477.800" r="1.500" fill="none" stroke="#e0e0e0" stroke-width="0.900"/><path d="M11.800 475.400v4.800M9.400 477.800h4.800" stroke="#e0e0e0" stroke-width="0.600"/>
</svg>
<span class="t" style="letter-spacing:-0.347px;left:7.500px;top:329.4px;font-family:'Liberation Serif',serif;font-size:9.800px;color:#dcdcdc;font-weight:bold">T</span>
<div id="status" class="a">
  <div class="a" style="left:0.500px;top:0;width:25px;height:9.400px;background:#4b4b4b"></div><span class="t" style="letter-spacing:0.084px;left:2.500px;top:2.8px;font-size:6.800px;color:#e6e6e6">8,33%</span>
  <span class="t" style="letter-spacing:-0.249px;left:37.300px;top:2.6px;font-size:5.800px;color:#dedede">11906 px x 7937 px (300 ppi)</span>
  <svg style="left:118.500px;top:2.600px" width="3" height="4.400" viewBox="0 0 3 4.400"><path d="M0.500 0.400l1.800 1.800-1.800 1.800" fill="none" stroke="#cfcfcf" stroke-width="0.600"/></svg>
</div>

<div class="a" style="left:0;top:550.200px;width:1024px;height:0.800px;background:#3e3e3e"></div>
<!-- ===== right dock ===== -->
<div id="vscroll" class="a" style="left:844.400px;top:57.500px;width:9px;height:484.100px;background:#4b4b4b"></div>
<div class="a" style="left:845.300px;top:64px;width:6.900px;height:324.800px;background:#686868"></div>
<svg style="left:846.800px;top:534.400px" width="4" height="3" viewBox="0 0 4 3"><path d="M0.400 0.500L2 2.200 3.600 0.500" fill="none" stroke="#b5b5b5" stroke-width="0.600"/></svg>
<svg style="left:846.800px;top:59.400px" width="4" height="3" viewBox="0 0 4 3"><path d="M0.400 2.400L2 0.700 3.600 2.400" fill="none" stroke="#9b9b9b" stroke-width="0.600"/></svg>
<div id="dockbg" class="a" style="left:853px;top:32px;width:171px;height:519px;background:#464646"></div>
<div class="a" style="left:853px;top:32px;width:1.600px;height:519px;background:#3a3a3a"></div>
<div class="a" style="left:874.200px;top:39.500px;width:1.600px;height:512px;background:#3c3c3c"></div>
<svg style="left:866px;top:33.500px" width="160" height="5" viewBox="866 33.500 160 5" fill="#d0d0d0"><path d="M869.200 34.600v2.800l-1.600-1.400zM871.300 34.600v2.800l-1.600-1.400zM1018 34.600v2.800l1.600-1.400zM1020.100 34.600v2.800l1.600-1.400z"/></svg>
<div class="a" style="left:854.800px;top:215px;width:19.400px;height:336px;background:#4f4f4f"></div>
<div id="iconcol" class="a pan" style="left:854.800px;top:39.500px;width:19.400px;height:175.800px"></div>
<div class="a" style="left:854.800px;top:75.400px;width:19.400px;height:0.800px;background:#3f3f3f"></div>
<div class="a" style="left:854.800px;top:111.600px;width:19.400px;height:0.800px;background:#3f3f3f"></div>
<div class="a" style="left:854.800px;top:133.500px;width:19.400px;height:0.800px;background:#3f3f3f"></div>
<div class="a" style="left:854.800px;top:170.800px;width:19.400px;height:0.800px;background:#3f3f3f"></div>
<div class="a" style="left:854.800px;top:192.800px;width:19.400px;height:0.800px;background:#3f3f3f"></div>
<div class="a" style="left:858px;top:83px;width:13.700px;height:10.600px;background:#2e2e2e;border-radius:1px"></div>
<svg id="dockicons" style="left:854px;top:39px" width="21" height="180" viewBox="854 39 21 180" fill="#e2e2e2">
  <!-- history states -->
  <rect x="861" y="46.800" width="3" height="9" rx="0.400"/><rect x="861.800" y="48" width="1.400" height="1.400" fill="#535353"/><rect x="861.800" y="50.600" width="1.400" height="1.400" fill="#535353"/>
  <path d="M866 48.400c2 .2 2.800 2.600 1.400 5.600" fill="none" stroke="#e2e2e2" stroke-width="1"/><path d="M865 47.200l2.400.3-1.200 2.100z"/>
  <!-- play -->
  <path d="M861.200 63.200l7.800 3.500-7.800 3.500z"/>
  <!-- folder/libraries (active) -->
  <path d="M860.200 85h3l.8.900h5.400v6.400h-9.200z" fill="none" stroke="#e2e2e2" stroke-width="0.800"/><rect x="862" y="87.600" width="5.600" height="3.400" fill="#c9c9c9"/>
  <!-- info -->
  <circle cx="864.300" cy="103.500" r="4" fill="none" stroke="#e2e2e2" stroke-width="0.900"/><rect x="863.900" y="102.800" width="0.900" height="3"/><rect x="863.900" y="101" width="0.900" height="1"/>
  <!-- clone source -->
  <path d="M866 120.400c1 0 1.700.7 1.700 1.600 0 .7-.5 1.100-.7 1.700-.1.400.1.800.5.800h1c.6 0 .9.300.9.900v1h-6.800v-1c0-.6.300-.9.900-.9h1c.4 0 .6-.4.500-.8-.2-.6-.7-1-.7-1.700 0-.9.700-1.600 1.700-1.600zM862.600 127.200h6.800v1h-6.800z"/>
  <path d="M858.800 120.800h2.400M858.800 122.600h2.400M858.800 124.400h1.400" stroke="#e2e2e2" stroke-width="0.700" fill="none"/>
  <!-- paragraph pilcrow -->
  <path d="M864.400 158.200h3.800v.9h-.8v6.500h-.9v-6.500h-.9v6.500h-.900v-3.500c-1.500 0-2.300-.8-2.300-2s.8-1.900 2-1.900z"/>
  <!-- ??? brush preset : triangle + circular arrow -->
  <path d="M862.400 180.400l2.400 4.200h-4.800z"/><path d="M864.800 181.600a3.200 3.200 0 1 1-1.400 5.400" fill="none" stroke="#e2e2e2" stroke-width="0.900"/>
  <!-- history clock -->
  <path d="M861.600 203.200a4 4 0 1 1-.4 3.800" fill="none" stroke="#e2e2e2" stroke-width="0.900"/><path d="M859.800 202.600l2.400.1-.9 2.100z"/><path d="M864.800 203.200v2.600l1.800 1.200" fill="none" stroke="#e2e2e2" stroke-width="0.800"/>
</svg>
<span class="t" style="letter-spacing:0.134px;left:860.600px;top:143px;font-size:9.400px;color:#e2e2e2">A</span>
<div class="a" style="left:868px;top:143.400px;width:0.800px;height:7.600px;background:#e2e2e2"></div>

<!-- navigator panel -->
<div id="navpanel" class="a pan" style="left:875.800px;top:39.500px;width:148.200px;height:246.100px;overflow:hidden">
  <div class="a" style="left:0;top:0;width:148.200px;height:15px;background:#424242"></div>
  <div class="a" style="left:40.400px;top:0;width:37px;height:15px;background:#535353"></div>
  <span class="t sb" style="letter-spacing:-0.131px;left:5px;top:4.3px;font-size:5.900px;color:#a5a5a5">Istogramma</span>
  <span class="t sb" style="letter-spacing:-0.050px;left:45.700px;top:4.3px;font-size:5.900px;color:#f2f2f2">Navigatore</span>
  <svg style="left:141.200px;top:5.200px" width="5" height="4.400" viewBox="0 0 5 4.400"><path d="M0 0.600h5M0 2.200h5M0 3.800h5" stroke="#8a8a8a" stroke-width="1"/></svg>
  <div class="a" style="left:0;top:232.800px;width:148.200px;height:0.800px;background:#444"></div>
  <div class="a" style="left:0;top:233.600px;width:30.600px;height:12.500px;background:#4b4b4b"></div>
  <span class="t" style="letter-spacing:-0.122px;left:3.200px;top:237.3px;font-size:5.500px;color:#6f6f6f">8,33%</span>
  <svg style="left:34.200px;top:237.800px" width="5.200" height="3.400" viewBox="0 0 5.200 3.400"><path d="M0 3.400l1.600-2 1 1.100L3.800 0.800 5.200 3.400z" fill="#e6e6e6"/></svg>
  <div class="a" style="left:46.900px;top:237.800px;width:74.500px;height:1.100px;background:#7c7c7c"></div>
  <svg style="left:69.200px;top:239px" width="5.800" height="5" viewBox="0 0 5.800 5"><path d="M2.900 0.200L5.600 3.600v1.200H0.200V3.600z" fill="#f4f4f4"/></svg>
  <svg style="left:126.400px;top:237.200px" width="8.800" height="4.400" viewBox="0 0 8.800 4.400"><path d="M0 4.400l2.800-3.600 1.500 1.800L6 0l2.800 4.400z" fill="#e6e6e6"/></svg>
</div>
<svg id="navart" style="left:878px;top:115.200px" width="143.600" height="95.600" viewBox="0 0 143.600 95.600">
  <rect x="0" y="0" width="143.600" height="95.600" fill="#fbf9fa"/>
  <g transform="translate(0.500 0.350) scale(0.26880) translate(-172.200 -122.800)"><use href="#sign"/></g>
  <rect x="0.350" y="0.350" width="142.900" height="94.900" fill="none" stroke="#c4402f" stroke-width="0.900"/>
</svg>

<!-- adjustments panel -->
<div id="adjpanel" class="a pan" style="left:875.800px;top:287px;width:148.200px;height:125.500px;overflow:hidden">
  <div class="a" style="left:0;top:0;width:148.200px;height:14.600px;background:#424242"></div>
  <div class="a" style="left:38.400px;top:0;width:29.400px;height:14.600px;background:#464646"></div>
  <div class="a" style="left:0;top:0;width:38.400px;height:14.600px;background:#535353"></div>
  <span class="t sb" style="letter-spacing:-0.163px;left:5px;top:4.5px;font-size:5.900px;color:#f2f2f2">Regolazioni</span>
  <span class="t sb" style="letter-spacing:-0.132px;left:43.500px;top:4.5px;font-size:5.900px;color:#a5a5a5">Librerie</span>
  <svg style="left:141.200px;top:5.200px" width="5" height="4.400" viewBox="0 0 5 4.400"><path d="M0 0.600h5M0 2.200h5M0 3.800h5" stroke="#7a7a7a" stroke-width="1"/></svg>
  <svg style="left:9px;top:18.600px" width="36" height="8" viewBox="0 0 36 8">
    <path d="M0.300 3.600h6.200M3.400 0.500v6.200" stroke="#e0e0e0" stroke-width="0.900" fill="none"/>
    <path d="M14.200 1h2.400l.7.800h3.400v4.700h-6.500z" fill="#dcdcdc"/><path d="M14.200 2.700h6.500" stroke="#535353" stroke-width="0.400"/>
    <path d="M28.600 2.200h5.200l-.5 5h-4.200zM28.200 1.400h6M30.200 1.400v-.7h2v.7" fill="#777" stroke="#777" stroke-width="0.500"/>
  </svg>
  <svg style="left:133.200px;top:18.400px" width="7.400" height="8" viewBox="0 0 7.400 8"><path d="M0 1h1.200M0 4h1.200M0 7h1.200" stroke="#e0e0e0" stroke-width="0.900"/><path d="M2.400 1h5M2.400 4h5M2.400 7h5" stroke="#e0e0e0" stroke-width="1"/></svg>
  <div class="a" style="left:0;top:28.800px;width:148.200px;height:0.800px;background:#444"></div>
  <span class="t" style="letter-spacing:-0.165px;left:6px;top:36.2px;font-size:6.300px;color:#e8e8e8">Predefiniti</span>
  <span class="t" style="letter-spacing:-0.243px;left:43.100px;top:36.2px;font-size:6.300px;color:#f4f4f4;-webkit-text-stroke:0.150px #f4f4f4">Regolazioni singole</span>
  <div class="a" style="left:43.100px;top:46px;width:50px;height:1.300px;background:#ececec"></div>
  <!-- clipped tooltip-like label -->
  <div class="a" style="left:71.400px;top:51px;width:27.200px;height:7.700px;background:#3a3a3a;overflow:hidden">
    <span class="t sb" style="letter-spacing:-0.247px;left:0.600px;top:-1.300px;font-size:5.600px;color:#f0f0f0">saturazione</span>
  </div>
  <!-- scrollbar -->
  <div class="a" style="left:141px;top:51.500px;width:7.200px;height:74px;background:#4a4a4a"></div>
  <div class="a" style="left:141.600px;top:76px;width:6.600px;height:23.200px;background:#6b6b6b"></div>
  <svg style="left:142.600px;top:55px" width="4" height="3" viewBox="0 0 4 3"><path d="M0.400 2.400L2 0.700 3.600 2.400" fill="none" stroke="#9b9b9b" stroke-width="0.600"/></svg>
  <!-- icons row 1 -->
  <svg style="left:16.200px;top:65.200px" width="10.600" height="7.600" viewBox="0 0 10.600 7.600" fill="none" stroke="#e8e8e8" stroke-width="0.800"><path d="M1.400 1.800c1.400 0 2.600-1 3.900-1s2.500 1 3.900 1M5.300 0.600v1M0.400 5.200l1.400-3.200 1.400 3.200zM7.400 5.200l1.400-3.200 1.400 3.200z"/><path d="M0.400 5.400c0 2 2.800 2 2.800 0zM7.400 5.400c0 2 2.800 2 2.800 0z" fill="#e8e8e8"/></svg>
  <svg style="left:48.100px;top:64.800px" width="10" height="7.600" viewBox="0 0 10 7.600"><rect x="0.400" y="0.400" width="9.200" height="6.800" fill="none" stroke="#ececec" stroke-width="0.800"/><rect x="5" y="0.400" width="4.600" height="6.800" fill="#ececec"/></svg>
  <svg style="left:79.600px;top:65.600px" width="10.400" height="8.600" viewBox="0 0 10.400 8.600"><path d="M0.400 1.600h1.800l.7-1h2.400l.7 1h1.800v4.600H0.400z" fill="#e4e4e4"/><circle cx="4.100" cy="3.800" r="1.500" fill="#535353"/><circle cx="7.600" cy="5.800" r="2.200" fill="#535353" stroke="#e4e4e4" stroke-width="0.700"/></svg>
  <!-- labels row 1 -->
  <span class="t sb lbl" style="letter-spacing:-0.213px;left:8.400px;top:76.4px">Bilanciame</span>
  <span class="t sb lbl" style="letter-spacing:-0.158px;left:9.700px;top:82.6px">nto colore</span>
  <span class="t sb lbl" style="letter-spacing:-0.268px;left:43.100px;top:76.4px">Bianco e</span>
  <span class="t sb lbl" style="letter-spacing:-0.248px;left:47.700px;top:82.6px">nero</span>
  <span class="t sb lbl" style="letter-spacing:-0.057px;left:78.700px;top:76.4px">Filtro</span>
  <span class="t sb lbl" style="letter-spacing:-0.197px;left:72.400px;top:82.6px">fotografico</span>
  <!-- icons row 2 -->
  <svg style="left:16.200px;top:97.300px" width="10.600" height="9.400" viewBox="0 0 10.600 9.400"><circle cx="5.300" cy="3.200" r="3" fill="#8e8e8e"/><circle cx="3.400" cy="6" r="3" fill="#e8e8e8"/><circle cx="7.200" cy="6" r="3" fill="#d4d4d4"/><path d="M5.300 3.400c1 .6 1.500 1.600 1.500 2.800-.9.600-2.100.6-3 0 0-1.200.5-2.200 1.500-2.800z" fill="#777"/></svg>
  <svg style="left:48.100px;top:98px" width="10" height="7.800" viewBox="0 0 10 7.800" fill="none" stroke="#ececec" stroke-width="0.700"><rect x="0.400" y="0.400" width="9.200" height="7"/><path d="M0.400 2.600h9.200M0.400 5h9.200M3.500 0.400v7M6.500 0.400v7"/><rect x="0.400" y="0.400" width="9.200" height="1.800" fill="#ececec"/></svg>
  <svg style="left:79.300px;top:98px" width="10" height="7.800" viewBox="0 0 10 7.800"><rect x="0.400" y="0.400" width="9.200" height="7" fill="#9a9a9a" stroke="#ececec" stroke-width="0.700"/><path d="M0.400 0.400l4.600 4 4.600-4z" fill="#ececec"/><path d="M0.400 7.400l4.600-4 4.600 4" fill="none" stroke="#cfcfcf" stroke-width="0.600"/></svg>
  <!-- labels row 2 -->
  <span class="t sb lbl" style="letter-spacing:-0.209px;left:8.100px;top:108.6px">Miscelatore</span>
  <span class="t sb lbl" style="letter-spacing:-0.244px;left:13.700px;top:116.8px">canale</span>
  <span class="t sb lbl" style="letter-spacing:-0.293px;left:39.700px;top:108.6px">Consultazio</span>
  <span class="t sb lbl" style="letter-spacing:-0.167px;left:41.800px;top:116.8px">ne colore</span>
  <span class="t sb lbl" style="letter-spacing:-0.294px;left:77.400px;top:108.6px">Colore</span>
  <span class="t sb lbl" style="letter-spacing:-0.131px;left:75.200px;top:116.8px">selettivo</span>
</div>

<!-- layers panel -->
<div id="laypanel" class="a" style="left:875.800px;top:414px;width:148.200px;height:135.600px;overflow:hidden;background:#535353">
  <div class="a" style="left:0;top:0;width:148.200px;height:16.200px;background:#424242"></div>
  <div class="a" style="left:23.600px;top:0;width:54.600px;height:16.200px;background:#464646"></div>
  <div class="a" style="left:48.600px;top:0;width:0.600px;height:16.200px;background:#3d3d3d"></div>
  <div class="a" style="left:78.200px;top:0;width:0.600px;height:16.200px;background:#3d3d3d"></div>
  <div class="a" style="left:0;top:0;width:23.600px;height:16.200px;background:#535353"></div>
  <span class="t sb" style="letter-spacing:-0.048px;left:5px;top:6.2px;font-size:5.900px;color:#f2f2f2">Livelli</span>
  <span class="t sb" style="letter-spacing:-0.284px;left:28.700px;top:6.2px;font-size:5.900px;color:#a5a5a5">Canali</span>
  <span class="t sb" style="letter-spacing:-0.161px;left:53.700px;top:6.2px;font-size:5.900px;color:#a5a5a5">Tracciati</span>
  <svg style="left:141.400px;top:6.400px" width="5" height="4.400" viewBox="0 0 5 4.400"><path d="M0 0.600h5M0 2.200h5M0 3.800h5" stroke="#8a8a8a" stroke-width="1"/></svg>
  <!-- filter row -->
  <div class="a" style="left:3.100px;top:21.600px;width:57px;height:10px;background:#4f4f4f;border:0.500px solid #585858;border-radius:1px"></div>
  <svg style="left:6.200px;top:23.800px" width="6" height="6" viewBox="0 0 6 6" fill="none" stroke="#d0d0d0" stroke-width="0.900"><circle cx="2.300" cy="2.300" r="1.800"/><path d="M3.700 3.700l2 2"/></svg>
  <span class="t" style="letter-spacing:-0.297px;left:14.700px;top:25.4px;font-size:5.600px;color:#858585">Tipo</span>
  <svg style="left:54.400px;top:25.400px" width="4" height="3" viewBox="0 0 4 3"><path d="M0.400 0.500L2 2.200 3.600 0.500" fill="none" stroke="#6c6c6c" stroke-width="0.600"/></svg>
  <svg style="left:72px;top:22.600px" width="76" height="8" viewBox="72 22.600 76 8" fill="none" stroke="#d6d6d6" stroke-width="0.800">
    <rect x="72.800" y="23.800" width="5.800" height="4.800"/><path d="M74.200 27.600l1.200-1.600 1 1 .8-.8" stroke-width="0.600"/>
    <circle cx="88.200" cy="26.200" r="2.700"/><path d="M86.300 28.100a2.700 2.700 0 0 0 3.800-3.800z" fill="#d6d6d6" stroke="none"/>
    <path d="M99.200 23.800h4.600M101.500 23.800v5M100.500 28.800h2" stroke-width="1"/>
    <rect x="111.600" y="24" width="5.400" height="4.600"/><rect x="110.800" y="23.200" width="1.400" height="1.400" fill="#d6d6d6" stroke="none"/><rect x="116.400" y="23.200" width="1.400" height="1.400" fill="#d6d6d6" stroke="none"/><rect x="110.800" y="28" width="1.400" height="1.400" fill="#d6d6d6" stroke="none"/><rect x="116.400" y="28" width="1.400" height="1.400" fill="#d6d6d6" stroke="none"/>
    <path d="M124.600 23.600h3.600l1.400 1.400v4h-5z"/><rect x="124" y="26.400" width="3" height="2.800" fill="#d6d6d6" stroke="none"/>
  </svg>
  <div class="a" style="left:142.600px;top:21px;width:4.400px;height:4.400px;border-radius:50%;background:#9c9c9c"></div>
  <div class="a" style="left:144.200px;top:25.400px;width:1.200px;height:4.600px;background:#5e5e5e"></div>
  <div class="a" style="left:0;top:33.500px;width:148.200px;height:0.700px;background:#494949"></div>
  <!-- blend row -->
  <div class="a" style="left:3.100px;top:36.600px;width:90.400px;height:9.600px;background:#4f4f4f;border:0.500px solid #585858;border-radius:1px"></div>
  <span class="t" style="letter-spacing:-0.249px;left:6.800px;top:40.2px;font-size:5.600px;color:#858585">Normale</span>
  <svg style="left:88px;top:40.400px" width="4" height="3" viewBox="0 0 4 3"><path d="M0.400 0.500L2 2.200 3.600 0.500" fill="none" stroke="#6c6c6c" stroke-width="0.600"/></svg>
  <span class="t" style="letter-spacing:-0.205px;left:98.100px;top:40.2px;font-size:5.600px;color:#858585">Opacità:</span>
  <div class="a" style="left:120.800px;top:37.500px;width:17px;height:7.200px;background:#494949;border:0.500px solid #5a5a5a"></div>
  <span class="t" style="letter-spacing:-0.420px;left:123.200px;top:38.9px;font-size:5.200px;color:#6f6f6f">100%</span>
  <div class="a" style="left:139.600px;top:37.500px;width:6.600px;height:7.200px;background:#4f4f4f;border:0.500px solid #585858"></div>
  <!-- lock row -->
  <span class="t" style="letter-spacing:-0.250px;left:3.700px;top:54.2px;font-size:5.600px;color:#858585">Bloc.:</span>
  <svg style="left:20px;top:52px" width="56" height="8" viewBox="20 52 56 8" fill="none" stroke="#a9a9a9" stroke-width="0.700">
    <rect x="21.400" y="53.200" width="2.400" height="2.400"/><rect x="24.600" y="53.200" width="2.400" height="2.400"/><rect x="21.400" y="56.400" width="2.400" height="2.400"/><rect x="24.600" y="56.400" width="2.400" height="2.400"/>
    <path d="M39 53l-3.200 3.800" stroke-width="1.100"/><path d="M35.400 56.600c-1 .3-1 1.600-2 2.200 1.400.3 2.600-.4 2.800-1.500z" fill="#a9a9a9" stroke="none"/>
    <path d="M48 52.800v6.200M44.900 55.900h6.200" stroke-width="0.700"/><path d="M48 52.400l1 1.200h-2zM48 59.400l1-1.200h-2zM44.500 55.900l1.200-1v2zM51.500 55.900l-1.200-1v2z" fill="#a9a9a9" stroke="none"/>
    <path d="M56.800 54.600h5.400l1.400 3.800h-5.400V53.200M62.600 53.400l.8-.8"/>
    <rect x="69.200" y="55.600" width="5" height="3.600" fill="#bdbdbd" stroke="none"/><path d="M70.300 55.600v-1.200a1.400 1.400 0 0 1 2.800 0v1.200" stroke="#bdbdbd"/>
  </svg>
  <span class="t" style="letter-spacing:-0.254px;left:99.700px;top:54.2px;font-size:5.600px;color:#858585">Riemp.:</span>
  <div class="a" style="left:120.800px;top:52.800px;width:17px;height:7.200px;background:#494949;border:0.500px solid #5a5a5a"></div>
  <span class="t" style="letter-spacing:-0.420px;left:123.200px;top:54.2px;font-size:5.200px;color:#6f6f6f">100%</span>
  <div class="a" style="left:139.600px;top:52.800px;width:6.600px;height:7.200px;background:#4f4f4f;border:0.500px solid #585858"></div>
  <!-- layer list -->
  <div class="a" style="left:0;top:64px;width:148.200px;height:58px;background:#4b4b4b"></div>
  <div class="a" style="left:140.400px;top:64px;width:7.800px;height:58px;background:#474747"></div>
  <div class="a" style="left:16.200px;top:64px;width:124.200px;height:16px;background:#6b6b6b"></div>
  <svg style="left:4.600px;top:70.400px" width="7.400" height="5" viewBox="0 0 7.400 5"><path d="M0.200 2.500C1.200 0.900 2.400 0.200 3.700 0.200s2.500.7 3.500 2.300c-1 1.600-2.200 2.300-3.500 2.300S1.200 4.100.2 2.500z" fill="#f0f0f0"/><circle cx="3.700" cy="2.500" r="1.300" fill="#4b4b4b"/></svg>
  <span class="t" style="letter-spacing:-0.454px;left:40.600px;top:69.8px;font-size:6.200px;font-style:italic;color:#f2f2f2">Sfondo</span>
  <svg style="left:126.200px;top:69.800px" width="6" height="6.600" viewBox="0 0 6 6.600" fill="none" stroke="#dedede" stroke-width="0.700"><rect x="0.500" y="2.800" width="5" height="3.400"/><path d="M1.500 2.800V2a1.500 1.500 0 0 1 3 0v.8M3 4v1.200"/></svg>
  <!-- bottom bar -->
  <div class="a" style="left:0;top:122px;width:148.200px;height:0.700px;background:#444"></div>
  <svg style="left:40px;top:125.600px" width="96" height="8" viewBox="40 125.600 96 8" fill="none" stroke="#8f8f8f" stroke-width="0.800">
    <rect x="41.600" y="128.200" width="3.800" height="2.600" rx="1.300"/><rect x="45" y="128.200" width="3.800" height="2.600" rx="1.300"/>
    <rect x="70.200" y="126.600" width="6.800" height="5.200" fill="#c4c4c4" stroke="none"/><circle cx="73.600" cy="129.200" r="1.500" fill="#535353" stroke="none"/>
    <circle cx="88.500" cy="129.300" r="2.800" stroke="#c4c4c4"/><path d="M86.500 131.300a2.800 2.800 0 0 0 4-4z" fill="#c4c4c4" stroke="none"/>
    <path d="M99.400 126.800h2.600l.8.900h3.500v4.400h-6.900z" fill="#a9a9a9" stroke="none"/>
    <rect x="114.600" y="126.400" width="5.800" height="5.800" stroke="#c4c4c4"/><path d="M117.500 127.800v3M116 129.300h3" stroke="#c4c4c4"/>
    <path d="M128.600 127.600h5l-.5 4.800h-4zM128 126.800h6.200M130 126.800v-.7h2.200v.7" fill="#8f8f8f" stroke="#8f8f8f" stroke-width="0.500"/>
  </svg>
  <span class="t" style="letter-spacing:0.128px;left:56.900px;top:125.200px;font-size:7.400px;font-style:italic;font-family:'Liberation Serif',serif;color:#b0b0b0">fx</span>
</div>
<svg id="layerthumb" style="left:894.700px;top:480.500px" width="16.400" height="11.400" viewBox="0 0 16.400 11.400">
  <rect width="16.400" height="11.400" fill="#fbf9fa"/>
  <g transform="scale(0.03089) translate(-172.200 -122.800)"><use href="#sign"/></g>
</svg>

<!-- ===== properties floating panel ===== -->
<div id="props" class="a" style="left:729.400px;top:75.200px;width:124px;height:214.400px;background:#3a3a3a"></div>
<div class="a pan" style="left:730px;top:75.800px;width:123px;height:210.600px;overflow:hidden">
  <div class="a" style="left:0;top:0;width:123px;height:15.800px;background:#424242"></div>
  <div class="a" style="left:0;top:0;width:32.800px;height:15.800px;background:#535353"></div>
  <span class="t sb" style="letter-spacing:-0.107px;left:5px;top:4.9px;font-size:6px;color:#f0f0f0">Proprietà</span>
  <span class="t sb" style="letter-spacing:0.071px;left:37.500px;top:4.9px;font-size:6px;color:#a3a3a3">Info</span>
  <svg style="left:101px;top:5.400px" width="22" height="6" viewBox="0 0 22 6" fill="none" stroke="#b4b4b4" stroke-width="0.600"><path d="M1.200 0.800l2 2.100-2 2.100M3.600 0.800l2 2.100-2 2.100"/><path d="M10.300 0v6" stroke="#777"/><path d="M14.400 1.200h5.400M14.400 2.900h5.400M14.400 4.600h5.400" stroke="#a8a8a8" stroke-width="1"/></svg>
  <!-- document row -->
  <div class="a" style="left:6px;top:19.300px;width:11.400px;height:11.300px;background:#3a3a3a;border-radius:1px"></div>
  <svg style="left:8.800px;top:21.300px" width="6" height="7.400" viewBox="0 0 6 7.400"><path d="M0.500 0.500h3.200l1.800 1.800v4.600h-5zM3.600 0.500v2h2" fill="none" stroke="#e4e4e4" stroke-width="0.800"/></svg>
  <span class="t" style="letter-spacing:-0.210px;left:20.900px;top:24.5px;font-size:5.700px;color:#e6e6e6">Documento</span>
  <div class="a" style="left:0;top:33.200px;width:123px;height:0.700px;background:#444"></div>
  <!-- scrollbar -->
  <div class="a" style="left:115.200px;top:36px;width:7.800px;height:160px;background:#4b4b4b"></div>
  <div class="a" style="left:115.800px;top:43.800px;width:6.400px;height:97.600px;background:#6b6b6b"></div>
  <svg style="left:117px;top:38.600px" width="4" height="3" viewBox="0 0 4 3"><path d="M0.400 2.400L2 0.700 3.600 2.400" fill="none" stroke="#9b9b9b" stroke-width="0.600"/></svg>
  <svg style="left:117px;top:190.200px" width="4" height="3" viewBox="0 0 4 3"><path d="M0.400 0.500L2 2.200 3.600 0.500" fill="none" stroke="#b5b5b5" stroke-width="0.600"/></svg>
  <!-- Tela -->
  <svg style="left:4.300px;top:40.600px" width="4.200" height="3" viewBox="0 0 4.200 3"><path d="M0.400 0.500L2.100 2.300 3.800 0.500" fill="none" stroke="#b5b5b5" stroke-width="0.600"/></svg>
  <span class="t sb" style="letter-spacing:0.021px;left:12.500px;top:39.4px;font-size:6px;color:#f0f0f0">Tela</span>
  <svg style="left:10px;top:57.600px" width="5.200" height="8.400" viewBox="0 0 5.200 8.400" fill="none" stroke="#e2e2e2" stroke-width="0.800"><path d="M1 3.200V2.400a1.600 1.600 0 0 1 3.200 0v.8M1 5.200v.800a1.600 1.600 0 0 0 3.200 0v-.800M2.600 2.600v3.200"/></svg>
  <span class="t" style="left:28.500px;top:52.9px;font-size:5.400px;color:#e0e0e0">L</span>
  <span class="t" style="left:28px;top:66.6px;font-size:5.400px;color:#e0e0e0">A</span>
  <div class="a" style="left:34.600px;top:51.400px;width:27.500px;height:7.800px;background:#3e3e3e;border-radius:0.800px"></div>
  <div class="a" style="left:34.600px;top:64.200px;width:27.500px;height:7.800px;background:#3e3e3e;border-radius:0.800px"></div>
  <span class="t" style="letter-spacing:-0.060px;left:37px;top:52.9px;font-size:5.400px;color:#f0f0f0">11906 px</span>
  <span class="t" style="letter-spacing:-0.170px;left:37px;top:66.6px;font-size:5.400px;color:#f0f0f0">7937 px</span>
  <span class="t" style="left:70.500px;top:52.9px;font-size:5.400px;color:#d0d0d0">X</span>
  <span class="t" style="left:70.500px;top:66.6px;font-size:5.400px;color:#d0d0d0">Y</span>
  <div class="a" style="left:77.700px;top:51.400px;width:28px;height:7.800px;background:#4b4b4b;border:0.500px solid #595959;border-radius:0.800px"></div>
  <div class="a" style="left:77.700px;top:64.200px;width:28px;height:7.800px;background:#4b4b4b;border:0.500px solid #595959;border-radius:0.800px"></div>
  <span class="t" style="letter-spacing:-0.151px;left:80.300px;top:52.9px;font-size:5.400px;color:#717171">0 px</span>
  <span class="t" style="letter-spacing:-0.151px;left:80.300px;top:66.6px;font-size:5.400px;color:#717171">0 px</span>
  <!-- orientation -->
  <svg style="left:39px;top:81.200px" width="8" height="9" viewBox="0 0 8 9"><rect x="0.400" y="0.400" width="7" height="8" fill="none" stroke="#e2e2e2" stroke-width="0.800"/><circle cx="3.900" cy="3" r="1.100" fill="#cfcfcf"/><path d="M2 8v-2.200c0-1.400 3.800-1.400 3.800 0V8z" fill="#cfcfcf"/></svg>
  <div class="a" style="left:50.900px;top:79.400px;width:11.700px;height:11.700px;background:#2d2d2d;border-radius:1px"></div>
  <svg style="left:52.500px;top:82.100px" width="8.600" height="7" viewBox="0 0 8.600 7"><rect x="0.400" y="0.400" width="7.800" height="6.200" fill="none" stroke="#f0f0f0" stroke-width="0.800"/><circle cx="4.300" cy="2.500" r="1" fill="#f0f0f0"/><path d="M2.200 6.200V5c0-1.400 4.200-1.400 4.200 0v1.200z" fill="#f0f0f0"/></svg>
  <span class="t" style="letter-spacing:-0.126px;left:36.800px;top:99.5px;font-size:5.500px;color:#e4e4e4">Risol.: 300 pixel/pollice</span>
  <!-- Metodo -->
  <span class="t" style="letter-spacing:-0.143px;left:12.800px;top:112px;font-size:5.500px;color:#e0e0e0">Metodo</span>
  <div class="a" style="left:34.900px;top:110.400px;width:70px;height:10.300px;background:#3d3d3d;border-radius:1px"></div>
  <span class="t" style="letter-spacing:-0.366px;left:38.800px;top:114px;font-size:5.600px;color:#f0f0f0">Colore RGB</span>
  <svg style="left:99.400px;top:114.400px" width="4" height="3" viewBox="0 0 4 3"><path d="M0.400 0.500L2 2.200 3.600 0.500" fill="none" stroke="#cfcfcf" stroke-width="0.600"/></svg>
  <div class="a" style="left:34.900px;top:123.900px;width:70px;height:10.100px;background:#3d3d3d;border-radius:1px"></div>
  <span class="t" style="letter-spacing:-0.077px;left:38.800px;top:127.4px;font-size:5.600px;color:#f0f0f0">8 bit/canale</span>
  <svg style="left:99.400px;top:127.800px" width="4" height="3" viewBox="0 0 4 3"><path d="M0.400 0.500L2 2.200 3.600 0.500" fill="none" stroke="#cfcfcf" stroke-width="0.600"/></svg>
  <span class="t" style="letter-spacing:-0.287px;left:14.600px;top:141.4px;font-size:5.500px;color:#e0e0e0">Riempi</span>
  <div class="a" style="left:35px;top:137.200px;width:9.600px;height:10.500px;border:0.600px solid #626262;background:#505050"></div>
  <div class="a" style="left:47px;top:139px;width:58px;height:9.600px;background:#4b4b4b;border:0.500px solid #595959;border-radius:1px"></div>
  <span class="t" style="letter-spacing:-0.123px;left:50.900px;top:142.2px;font-size:5.500px;color:#797979">Colore di sfondo</span>
  <svg style="left:99.400px;top:142.400px" width="4" height="3" viewBox="0 0 4 3"><path d="M0.400 0.500L2 2.200 3.600 0.500" fill="none" stroke="#666" stroke-width="0.600"/></svg>
  <div class="a" style="left:0;top:152.200px;width:115px;height:0.700px;background:#454545"></div>
  <!-- Righelli e griglie -->
  <svg style="left:4.300px;top:159.600px" width="4.200" height="3" viewBox="0 0 4.200 3"><path d="M0.400 0.500L2.100 2.300 3.800 0.500" fill="none" stroke="#b5b5b5" stroke-width="0.600"/></svg>
  <span class="t sb" style="letter-spacing:0.041px;left:12.700px;top:158.4px;font-size:6px;color:#f0f0f0">Righelli e griglie</span>
  <div class="a" style="left:6.100px;top:170.400px;width:12.300px;height:12.300px;background:#2d2d2d;border-radius:1px"></div>
  <svg style="left:8px;top:172.300px" width="8.600" height="8.600" viewBox="0 0 8.600 8.600"><path d="M0.200 0.200h8.200v2.600H2.800v5.600H0.200z" fill="#f0f0f0"/><path d="M3.600 1.600v1.200M5.200 1.600v1.200M6.800 1.600v1.200M1.600 3.800h1.200M1.600 5.400h1.200M1.600 7h1.200" stroke="#2d2d2d" stroke-width="0.500"/></svg>
  <svg style="left:25.500px;top:172px" width="9.400" height="9.200" viewBox="0 0 9.400 9.200" fill="none" stroke="#d8d8d8" stroke-width="0.700"><rect x="0.400" y="0.400" width="8.600" height="8.400"/><path d="M3.300 0.400v8.400M6.100 0.400v8.400M0.400 3.200h8.600M0.400 6h8.600"/></svg>
  <svg style="left:42.700px;top:172px" width="9.400" height="9.200" viewBox="0 0 9.400 9.200" fill="none" stroke="#d8d8d8" stroke-width="0.700"><rect x="0.400" y="0.400" width="8.600" height="8.400"/><path d="M3.300 1.200v6.800M6.100 1.200v6.800M1.200 3.200h7M1.200 6h7" stroke="#9a9a9a" stroke-dasharray="0.800 0.800"/></svg>
  <div class="a" style="left:65.500px;top:172px;width:39.400px;height:10.700px;background:#3d3d3d;border-radius:1px"></div>
  <span class="t" style="letter-spacing:-0.245px;left:69.600px;top:174.8px;font-size:5.600px;color:#f0f0f0">Pixel</span>
  <svg style="left:99.400px;top:176.200px" width="4" height="3" viewBox="0 0 4 3"><path d="M0.400 0.500L2 2.200 3.600 0.500" fill="none" stroke="#cfcfcf" stroke-width="0.600"/></svg>
  <div class="a" style="left:0;top:189.200px;width:115px;height:0.700px;background:#494949"></div>
  <div class="a" style="left:13.200px;top:195.600px;width:1.200px;height:1.200px;background:#9a9a9a"></div>
  <div class="a" style="left:19.200px;top:195.600px;width:0.800px;height:1.200px;background:#8a8a8a"></div>
  <div class="a" style="left:22.400px;top:195.400px;width:1.200px;height:1.400px;background:#bdbdbd"></div>
</div>
<div class="a" style="left:730px;top:286.400px;width:123px;height:2.800px;background:#5d5d5d"></div>

<!-- ===== dialog ===== -->
<div id="dialog" class="a" style="left:624.3px;top:297.4px;width:186px;height:164.500px;background:#535353;border-radius:3.600px;box-shadow:0 8px 17px 0 rgba(0,0,0,.34),0 1px 4px rgba(0,0,0,.2),0 0 0 0.500px rgba(30,30,30,.32);overflow:hidden">
  <div class="a" style="left:0;top:0;width:186px;height:15.700px;background:#f3f3f3"></div>
  <span class="t" style="letter-spacing:-0.385px;left:5px;top:5.3px;font-size:6.600px;color:#1b1b1b">Opzioni JPEG</span>
  <svg style="left:175.300px;top:4.800px" width="5.600" height="5.600" viewBox="0 0 5.600 5.600"><path d="M0.300 0.300l5 5M5.300 0.300l-5 5" stroke="#222" stroke-width="0.700" fill="none"/></svg>
  <!-- Alone -->
  <span class="t" style="letter-spacing:-0.377px;left:6.800px;top:24px;font-size:7px;color:#7b7b7b">Alone:</span>
  <div class="a" style="left:31.700px;top:22.600px;width:75px;height:10.300px;background:#4b4b4b;border:0.500px solid #585858;border-radius:1px"></div>
  <span class="t" style="letter-spacing:-0.277px;left:36px;top:23.2px;font-size:7px;color:#7d7d7d">Nessuno</span>
  <svg style="left:100.600px;top:26.600px" width="4" height="3" viewBox="0 0 4 3"><path d="M0.400 0.500L2 2.200 3.600 0.500" fill="none" stroke="#606060" stroke-width="0.600"/></svg>
  <!-- fieldset 1 -->
  <div class="a" style="left:6.200px;top:42px;width:116.400px;height:43px;border:0.600px solid #474747;border-radius:1px"></div>
  <div class="a" style="left:13.500px;top:38px;width:58.500px;height:8px;background:#535353"></div>
  <span class="t" style="letter-spacing:-0.202px;left:16.500px;top:38px;font-size:7px;color:#e6e6e6">Opzioni immagine</span>
  <span class="t" style="letter-spacing:-0.232px;left:12.200px;top:53.3px;font-size:7.100px;color:#e6e6e6">Qualità:</span>
  <div class="a" style="left:41.600px;top:50.700px;width:13px;height:10.600px;background:#454545;border:0.500px solid #404040;border-radius:1px"></div>
  <span class="t" style="letter-spacing:-0.445px;left:43.800px;top:53.5px;font-size:7.100px;color:#f0f0f0">12</span>
  <div class="a" style="left:60.600px;top:50.700px;width:37.600px;height:10.600px;background:#454545;border:0.500px solid #404040;border-radius:1px"></div>
  <span class="t" style="letter-spacing:-0.299px;left:64.300px;top:53.5px;font-size:7.100px;color:#ececec">Massima</span>
  <svg style="left:93.600px;top:54.800px" width="4" height="3" viewBox="0 0 4 3"><path d="M0.400 0.500L2 2.200 3.600 0.500" fill="none" stroke="#bcbcbc" stroke-width="0.600"/></svg>
  <span class="t" style="letter-spacing:-0.144px;left:11.200px;top:67.8px;font-size:5.600px;color:#d8d8d8">file piccolo</span>
  <span class="t" style="letter-spacing:-0.030px;left:91.700px;top:67.8px;font-size:5.600px;color:#d8d8d8">file grande</span>
  <div class="a" style="left:15px;top:75.400px;width:99px;height:0.800px;background:#777"></div>
  <svg style="left:111.200px;top:74px" width="5.800" height="5.200" viewBox="0 0 5.800 5.200"><path d="M2.900 0.200L5.600 3.800v1.200H0.200V3.800z" fill="#f4f4f4"/></svg>
  <!-- fieldset 2 -->
  <div class="a" style="left:6.200px;top:93.900px;width:116.400px;height:64.700px;border:0.600px solid #474747;border-radius:1px"></div>
  <div class="a" style="left:13.500px;top:90px;width:52.500px;height:8px;background:#535353"></div>
  <span class="t" style="letter-spacing:-0.155px;left:16.600px;top:90.2px;font-size:7px;color:#e6e6e6">Opzioni formato</span>
  <div class="a" style="left:11.400px;top:102.300px;width:6.800px;height:6.800px;border-radius:50%;background:#f2f2f2"></div>
  <div class="a" style="left:13.500px;top:104.400px;width:2.600px;height:2.600px;border-radius:50%;background:#2b2b2b"></div>
  <div class="a" style="left:11.400px;top:116.700px;width:6.800px;height:6.800px;border-radius:50%;background:#404040;border:0.600px solid #5c5c5c"></div>
  <div class="a" style="left:11.400px;top:130.500px;width:6.800px;height:6.800px;border-radius:50%;background:#404040;border:0.600px solid #5c5c5c"></div>
  <span class="t" style="letter-spacing:-0.234px;left:21.200px;top:101.6px;font-size:7.300px;color:#ececec">Linea di base ("Standard")</span>
  <span class="t" style="letter-spacing:-0.273px;left:21.200px;top:116.3px;font-size:7.300px;color:#ececec">Linea di base ottimizzata</span>
  <span class="t" style="letter-spacing:-0.309px;left:21.200px;top:130.2px;font-size:7.300px;color:#ececec">Progressione ottimizzata</span>
  <span class="t" style="letter-spacing:-0.140px;left:19.700px;top:145.6px;font-size:7px;color:#7b7b7b">Scansioni:</span>
  <div class="a" style="left:55px;top:144.800px;width:17.500px;height:9.200px;background:#4b4b4b;border:0.500px solid #5b5b5b;border-radius:1px"></div>
  <span class="t" style="left:59.600px;top:146.2px;font-size:6.600px;color:#757575">3</span>
  <svg style="left:66.600px;top:148.400px" width="4" height="3" viewBox="0 0 4 3"><path d="M0.400 0.500L2 2.200 3.600 0.500" fill="none" stroke="#666" stroke-width="0.600"/></svg>
  <!-- buttons -->
  <div class="a" style="left:131.700px;top:21.600px;width:49px;height:13.500px;border-radius:6.750px;border:0.800px solid #d2d2d2"></div>
  <span class="t sb" style="letter-spacing:-0.662px;left:151.700px;top:24.2px;font-size:7px;color:#f2f2f2">OK</span>
  <div class="a" style="left:131.700px;top:39.900px;width:49px;height:13.500px;border-radius:6.750px;border:0.800px solid #6e6e6e"></div>
  <span class="t sb" style="letter-spacing:-0.294px;left:145.500px;top:42.2px;font-size:7px;color:#f2f2f2">Annulla</span>
  <div class="a" style="left:131.600px;top:63px;width:6.600px;height:6.500px;border-radius:1px;background:#f0f0f0"></div>
  <svg style="left:132.600px;top:64.200px" width="4.800" height="4.200" viewBox="0 0 4.800 4.200"><path d="M0.500 2.100l1.400 1.400 2.400-3" fill="none" stroke="#222" stroke-width="0.900"/></svg>
  <span class="t" style="letter-spacing:-0.212px;left:141.700px;top:62.7px;font-size:7px;color:#ececec">Anteprima</span>
  <span class="t" style="letter-spacing:-0.137px;left:132px;top:80.4px;font-size:5.200px;color:#d8d8d8">7,1M</span>
</div>

</div>
</body>
</html>
